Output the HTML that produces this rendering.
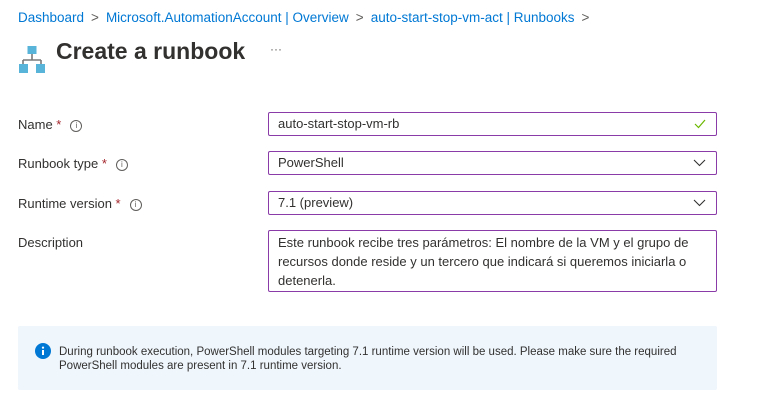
<!DOCTYPE html>
<html><head><style>
body{margin:0;width:771px;height:400px;background:#fff;font-family:"Liberation Sans",sans-serif;color:#323130;position:relative;overflow:hidden}
.a{position:absolute}
.bc{left:18px;top:10px;font-size:13.5px;color:#0078d4;white-space:nowrap}
.bc span.s{color:#605e5c;margin:0 7px}
.t{left:56px;top:38px;font-size:23px;font-weight:600;color:#323130}
.lbl{left:18px;font-size:13px}
.lbl b{color:#a4262c;font-weight:normal}
.ii{display:inline-block;width:10px;height:10px;border:1px solid #605e5c;border-radius:50%;font-size:8px;text-align:center;line-height:10px;margin-left:9px;vertical-align:1px;color:#605e5c}
.box{left:268px;width:449px;border:1px solid #8a3ba8;border-radius:2px;font-size:13px;box-sizing:border-box;padding:0 0 0 9px}
.chev{position:absolute;right:10px;top:7px}
</style></head><body>
<div class="a bc">Dashboard<span class="s">&gt;</span>Microsoft.AutomationAccount | Overview<span class="s">&gt;</span>auto-start-stop-vm-act | Runbooks<span class="s">&gt;</span></div>
<svg class="a" style="left:19px;top:46px" width="26" height="28" viewBox="0 0 26 28">
<rect x="8.5" y="0" width="9" height="8" fill="#59b4d9"/>
<path d="M13 8v6M4 14h18M4 14v4M22 14v4" stroke="#7a7a7a" stroke-width="1.6" fill="none"/>
<rect x="0" y="18" width="9" height="9" fill="#59b4d9"/>
<rect x="17" y="18" width="9" height="9" fill="#59b4d9"/>
</svg>
<div class="a t">Create a runbook</div>
<div class="a" style="left:270px;top:42px;font-size:12px;color:#605e5c">···</div>

<div class="a lbl" style="top:117px">Name <b>*</b><span class="ii">i</span></div>
<div class="a lbl" style="top:156px">Runbook type <b>*</b><span class="ii">i</span></div>
<div class="a lbl" style="top:196px">Runtime version <b>*</b><span class="ii">i</span></div>
<div class="a lbl" style="top:235px">Description</div>

<div class="a box" style="top:112px;height:24px;line-height:22px">auto-start-stop-vm-rb
<svg class="chev" width="12" height="10" viewBox="0 0 12 10" style="top:6px"><path d="M1 5l3.5 3.5L11 1" stroke="#6bb700" stroke-width="1.2" fill="none"/></svg></div>
<div class="a box" style="top:151px;height:24px;line-height:22px">PowerShell
<svg class="chev" width="13" height="8" viewBox="0 0 13 8"><path d="M1 1l5.5 5.5L12 1" stroke="#323130" stroke-width="1.1" fill="none"/></svg></div>
<div class="a box" style="top:191px;height:24px;line-height:22px">7.1 (preview)
<svg class="chev" width="13" height="8" viewBox="0 0 13 8"><path d="M1 1l5.5 5.5L12 1" stroke="#323130" stroke-width="1.1" fill="none"/></svg></div>
<div class="a box" style="top:230px;height:62px;line-height:19px;padding-top:2px;padding-right:20px">Este runbook recibe tres parámetros: El nombre de la VM y el grupo de recursos donde reside y un tercero que indicará si queremos iniciarla o detenerla.</div>

<div class="a" style="left:18px;top:326px;width:699px;height:64px;background:#eff6fc;border-radius:2px"></div>
<svg class="a" style="left:35px;top:343px" width="16" height="16" viewBox="0 0 16 16"><circle cx="8" cy="8" r="8" fill="#0078d4"/><rect x="7" y="7" width="2" height="5" fill="#fff"/><circle cx="8" cy="4.6" r="1.1" fill="#fff"/></svg>
<div class="a" style="left:59px;top:345px;font-size:11.5px;line-height:14px;width:660px">During runbook execution, PowerShell modules targeting 7.1 runtime version will be used. Please make sure the required PowerShell modules are present in 7.1 runtime version.</div>
</body></html>
